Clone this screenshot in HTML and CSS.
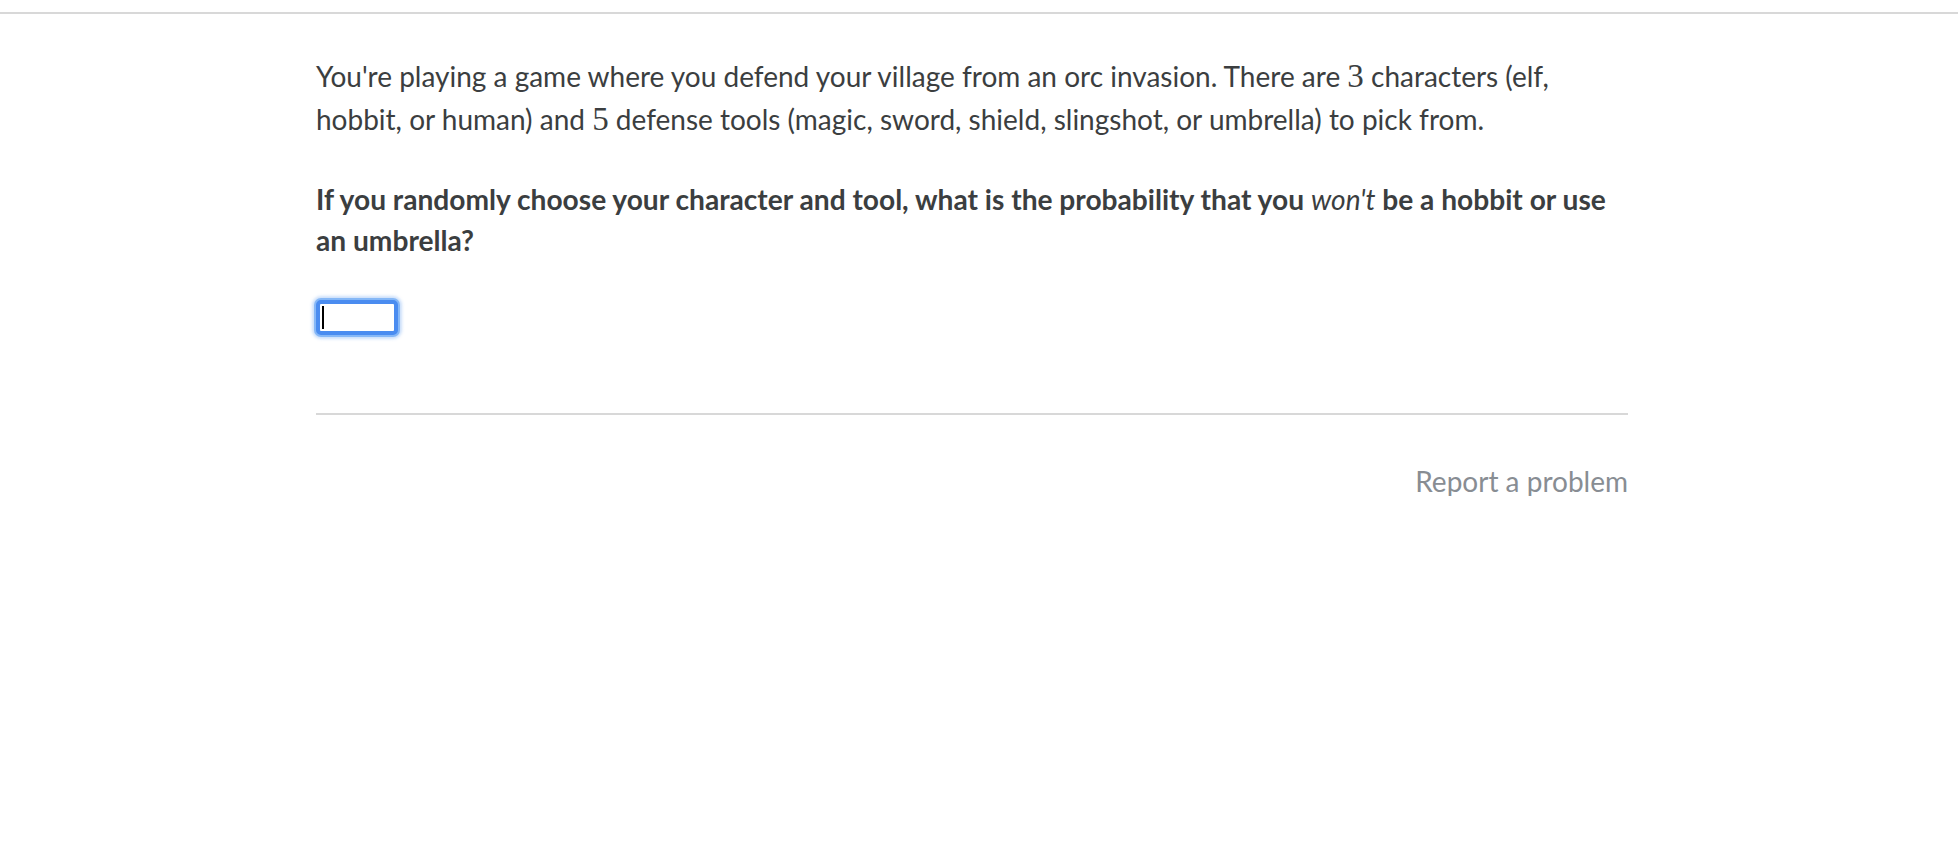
FILE: index.html
```html
<!DOCTYPE html>
<html lang="en">
<head>
<meta charset="utf-8">
<title>Exercise</title>
<link rel="stylesheet" href="styles.css">
</head>
<body>
<div class="topbar"></div>
<main class="content">
  <p class="para intro">You're playing a game where you defend your village from an orc invasion. There are <span class="math">3</span> characters (elf, hobbit, or human) and <span class="math">5</span> defense tools (magic, sword, shield, slingshot, or umbrella) to pick from.</p>
  <p class="para question">If you randomly choose your character and tool, what is the probability that you <em>won't</em> be a hobbit or use an umbrella?</p>
  <div class="answer">
    <div class="input"><span class="caret"></span></div>
  </div>
  <hr class="divider">
  <div class="footer"><a class="report">Report a problem</a></div>
</main>
</body>
</html>
```
FILE: styles.css
```css
html, body {
  margin: 0;
  padding: 0;
  background: #ffffff;
}
body {
  font-family: Lato, "Open Sans", sans-serif;
  color: #3b3e40;
}
.topbar {
  height: 12px;
  border-bottom: 2px solid #d8d8d8;
}
.content {
  width: 1312px;
  margin-left: 316px;
  padding-top: 41px;
}
.para {
  margin: 0;
  font-size: 28px;
  line-height: 42.5px;
}
.intro {
  margin-bottom: 39px;
}
.question {
  font-weight: 700;
  font-size: 28.15px;
  line-height: 41px;
}
.question em {
  font-style: italic;
  font-weight: 400;
}
.math {
  font-family: "Liberation Serif", "DejaVu Serif", serif;
  font-size: 33px;
  line-height: 1;
}
.answer {
  padding-top: 39px;
  padding-bottom: 78px;
}
.input {
  width: 72px;
  height: 27px;
  border: 4px solid #4a8cf0;
  box-shadow: 0 0 0 2px #86b8f7, 0 0 3px 4px rgba(140, 185, 245, 0.45);
  border-radius: 5px;
  background: #ffffff;
  display: flex;
  align-items: center;
  padding-left: 2px;
}
.caret {
  width: 2px;
  height: 23px;
  background: #000;
}
.divider {
  margin: 0;
  border: 0;
  border-top: 2px solid #d8d8d8;
}
.footer {
  display: flex;
  justify-content: flex-end;
  padding-top: 51px;
}
.report {
  font-size: 28px;
  color: #888d93;
  line-height: 30px;
}
```
